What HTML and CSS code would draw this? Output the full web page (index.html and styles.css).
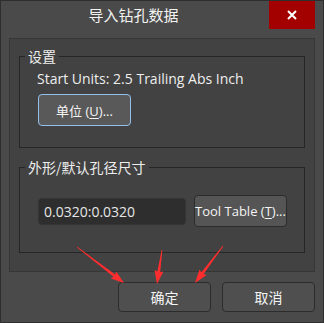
FILE: index.html
```html
<!DOCTYPE html>
<html lang="zh">
<head>
<meta charset="utf-8">
<title>导入钻孔数据</title>
<link rel="stylesheet" href="styles.css">
</head>
<body>
<div class="dialog">
  <div class="titlebar">
    <div class="title">导入钻孔数据</div>
    <div class="close">
      <svg width="10" height="10" viewBox="0 0 10 10"><path d="M1 1 L9 9 M9 1 L1 9" stroke="#fff" stroke-width="2" fill="none"/></svg>
    </div>
  </div>
  <div class="panel">
    <div class="group g1">
      <span class="legend">设置</span>
      <div class="units">Start Units: 2.5 Trailing Abs Inch</div>
      <button class="btn focus unit-btn">单位 (<u>U</u>)...</button>
    </div>
    <div class="group g2">
      <span class="legend">外形/默认孔径尺寸</span>
      <div class="row">
        <div class="field">0.0320:0.0320</div>
        <button class="btn tool-btn">Tool Table (<u>T</u>)...</button>
      </div>
    </div>
  </div>
  <div class="footer">
    <button class="btn wide">确定</button>
    <button class="btn wide">取消</button>
  </div>
  <svg class="arrows" width="324" height="323" viewBox="0 0 324 323">
    <g fill="#ff2d2d">
      <polygon transform="translate(77,247) rotate(37.45)" points="0,-0.4 47,-1.4 46,-4.5 59.2,0 46,4.5 47,1.4 0,0.4"/>
      <polygon transform="translate(162,250) rotate(98.37)" points="0,-0.4 22,-1.4 21,-4.5 34.4,0 21,4.5 22,1.4 0,0.4"/>
      <polygon transform="translate(223,246) rotate(127.1)" points="0,-0.4 34,-1.4 33,-4.5 46.4,0 33,4.5 34,1.4 0,0.4"/>
    </g>
  </svg>
</div>
</body>
</html>
```

FILE: styles.css
```css
* { box-sizing: border-box; }
html, body { margin: 0; padding: 0; background: #4a4a4a; }
body {
  font-family: "Open Sans", "Noto Sans CJK SC", sans-serif;
  color: #eeeeee;
}
.dialog {
  position: relative;
  width: 324px;
  height: 323px;
  border: 1px solid #2e2e2e;
  background: #4a4a4a;
  display: flex;
  flex-direction: column;
}
.titlebar {
  height: 28px;
  display: flex;
  padding-right: 8px;
}
.title {
  flex: 1;
  text-align: center;
  padding-right: 3px;
  font-family: "Noto Sans CJK SC", sans-serif;
  font-size: 15px;
  line-height: 28px;
  color: #f2f2f2;
}
.close {
  width: 46px;
  height: 28px;
  background: #a30000;
  display: flex;
  align-items: center;
  justify-content: center;
}
.panel {
  margin: 9px 8px 0 8px;
  height: 234px;
  background: #424242;
  border: 1px solid #363636;
  padding: 17px 9px 0 9px;
}
.group {
  position: relative;
  border: 1px solid #262626;
}
.g1 { height: 92px; padding: 13px 0 0 17px; }
.g2 { height: 86px; margin-top: 19px; padding: 27px 0 0 18px; }
.legend {
  position: absolute;
  top: -10px;
  left: 5px;
  padding: 0 3px;
  background: #424242;
  font-family: "Noto Sans CJK SC", sans-serif;
  font-size: 14px;
  line-height: 18px;
  color: #eeeeee;
}
.units {
  font-size: 14px;
  line-height: 18px;
  color: #eeeeee;
}
.btn {
  font-family: "Open Sans", "Noto Sans CJK SC", sans-serif;
  font-size: 13px;
  color: #f4f4f4;
  background: #555555;
  border: 1px solid #2c2c2c;
  border-radius: 4px;
  padding: 0;
  height: 32px;
  width: 93px;
}
.btn u { text-underline-offset: 2px; }
.focus {
  border-color: #93bfe9;
  background: #595959;
}
.unit-btn { display: block; margin: 6px 0 0 1px; }
.row {
  display: flex;
  align-items: center;
  gap: 8px;
}
.field {
  width: 148px;
  height: 27px;
  background: #2e2e2e;
  border: 1px solid #343434;
  border-radius: 4px;
  padding-left: 5px;
  font-size: 14px;
  line-height: 25px;
  color: #e6e6e6;
}
.footer {
  margin-top: 10px;
  display: flex;
  justify-content: flex-end;
  gap: 11px;
  padding-right: 8px;
}
.wide {
  height: 30px;
  width: 93px;
  background: #4f4f4f;
  font-family: "Noto Sans CJK SC", sans-serif;
  font-size: 14px;
}
.arrows {
  position: absolute;
  left: -1px;
  top: -1px;
  pointer-events: none;
}
```
